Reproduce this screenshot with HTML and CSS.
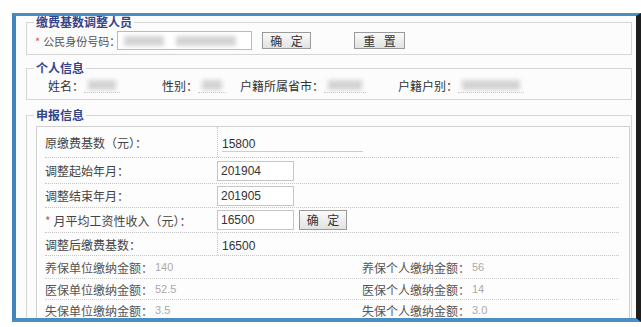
FILE: index.html
```html
<!DOCTYPE html>
<html>
  <head>
    <title>缴费基数调整</title>
    <link rel="stylesheet" href="styles.css">
  </head>
  <body>
    <div class="frame">
      <!-- 查询人员 -->
      <fieldset class="group group-query">
        <legend>缴费基数调整人员</legend>
        <div class="query-row">
          <label class="query-label"><span class="req">*</span>公民身份号码：</label>
          <div class="id-input">
            <span class="blur blur-a"></span>
            <span class="blur blur-b"></span>
          </div>
          <button class="btn btn-ok">确 定</button>
          <button class="btn btn-reset">重 置</button>
        </div>
      </fieldset>

      <!-- 个人信息 -->
      <fieldset class="group group-info">
        <legend>个人信息</legend>
        <div class="info-row">
          <div class="info-item item-name">
            <span>姓名：</span>
            <span class="info-value"><span class="blur blur-name"></span></span>
          </div>
          <div class="info-item item-sex">
            <span>性别：</span>
            <span class="info-value"><span class="blur blur-sex"></span></span>
          </div>
          <div class="info-item item-city">
            <span>户籍所属省市：</span>
            <span class="info-value"><span class="blur blur-city"></span></span>
          </div>
          <div class="info-item item-type">
            <span>户籍户别：</span>
            <span class="info-value"><span class="blur blur-type"></span></span>
          </div>
        </div>
      </fieldset>

      <!-- 申报信息 -->
      <fieldset class="group group-report">
        <legend>申报信息</legend>
        <div class="report">
          <div class="report-row row-1">
            <div class="report-label">原缴费基数（元）：</div>
            <div class="report-value text-value"><span class="underline">15800</span></div>
          </div>
          <div class="report-row row-2">
            <div class="report-label">调整起始年月：</div>
            <div class="report-value"><input class="field" type="text" value="201904"></div>
          </div>
          <div class="report-row row-3">
            <div class="report-label">调整结束年月：</div>
            <div class="report-value"><input class="field" type="text" value="201905"></div>
          </div>
          <div class="report-row row-4">
            <div class="report-label"><span class="req">*</span>月平均工资性收入（元）：</div>
            <div class="report-value">
              <input class="field" type="text" value="16500">
              <button class="btn btn-calc">确 定</button>
            </div>
          </div>
          <div class="report-row row-5">
            <div class="report-label">调整后缴费基数：</div>
            <div class="report-value text-value"><span>16500</span></div>
          </div>

          <div class="amount-row first">
            <div class="amount"><span class="amount-label">养保单位缴纳金额：</span><span class="amount-value">140</span></div>
            <div class="amount"><span class="amount-label">养保个人缴纳金额：</span><span class="amount-value">56</span></div>
          </div>
          <div class="amount-row">
            <div class="amount"><span class="amount-label">医保单位缴纳金额：</span><span class="amount-value">52.5</span></div>
            <div class="amount"><span class="amount-label">医保个人缴纳金额：</span><span class="amount-value">14</span></div>
          </div>
          <div class="amount-row">
            <div class="amount"><span class="amount-label">失保单位缴纳金额：</span><span class="amount-value">3.5</span></div>
            <div class="amount"><span class="amount-label">失保个人缴纳金额：</span><span class="amount-value">3.0</span></div>
          </div>
        </div>
      </fieldset>
    </div>
  </body>
</html>
```

FILE: styles.css
```css
body {
  margin: 0;
  background: #fff;
  font-family: "Noto Sans CJK SC", "Liberation Sans", sans-serif;
  font-size: 12px;
  color: #333;
}

.frame {
  margin: 13px 0 0 12px;
  height: 302px;
  border-top: 3px solid #4a8ec2;
  border-left: 4px solid #3f86bd;
  border-bottom: 4px solid #4a8ec2;
  border-right: 5px solid #1e1e1e;
  background: #fcfcfc;
  overflow: hidden;
}

.group {
  margin: 0 4px 0 10px;
  padding: 0;
  border: 1px solid #d6d6d6;
}

.group legend {
  margin-left: 7px;
  padding: 0 2px;
  font-size: 12px;
  font-weight: bold;
  line-height: 14px;
  color: #34448a;
}

.req {
  color: #e0504a;
  margin-right: 3px;
}

/* 查询 */
.group-query {
  padding: 3px 0 4px;
}

.group-query legend {
  line-height: 12px;
}

.query-row {
  display: flex;
  align-items: center;
  height: 19px;
  margin-left: 8px;
}

.query-label {
  width: 82px;
  font-size: 11px;
  color: #555;
  white-space: nowrap;
}

.id-input {
  box-sizing: border-box;
  width: 135px;
  height: 19px;
  border: 1px solid #bbb;
  background: #fff;
  display: flex;
  align-items: center;
  padding-left: 6px;
  gap: 12px;
}

.blur {
  display: inline-block;
  height: 10px;
  background: #d4d4d4;
  filter: blur(2px);
}

.blur-a { width: 40px; }
.blur-b { width: 60px; }

.btn {
  box-sizing: border-box;
  height: 17px;
  width: 49px;
  padding: 0 0 0 3px;
  border: 1px solid #9a9a9a;
  background: linear-gradient(#fafafa, #e2e2e2);
  font-family: "Noto Sans CJK SC", sans-serif;
  font-size: 12px;
  line-height: 15px;
  letter-spacing: 3px;
  color: #333;
}

.btn-ok {
  margin-left: 10px;
}

.btn-reset {
  margin-left: 43px;
  width: 51px;
}

/* 个人信息 */
.group-info {
  margin-top: 6px;
  padding: 0 0 4px;
}

.info-row {
  display: flex;
  align-items: center;
  height: 20px;
  margin-left: 21px;
}

.info-item {
  display: flex;
  align-items: center;
  white-space: nowrap;
}

.item-name { width: 114px; }
.item-sex { width: 78px; }
.item-city { width: 158px; }

.info-value {
  display: flex;
  align-items: center;
  height: 14px;
  border-bottom: 1px dotted #c8c8c8;
  padding: 0 4px;
}

.blur-name { width: 28px; }
.blur-sex { width: 20px; }
.blur-city { width: 34px; }
.blur-type { width: 58px; }

/* 申报信息 */
.group-report {
  margin-top: 8px;
  padding: 4px 0 0;
}

.report {
  margin: 0 1px 0 9px;
  border: 1px solid #d0d0d0;
  background: #fdfdfd;
  padding-bottom: 20px;
}

.report-row {
  display: flex;
  margin: 0 10px 0 8px;
  border-bottom: 1px dotted #c4c4c4;
  color: #444;
}

.report-label {
  width: 172px;
  display: flex;
  align-items: center;
  white-space: nowrap;
}

.report-value {
  flex: 1;
  display: flex;
  align-items: center;
  font-family: "Liberation Sans", sans-serif;
  color: #333;
}

.text-value {
  border-left: 1px dotted #c4c4c4;
  padding-left: 4px;
}

.row-1 { height: 30px; }
.row-1 .text-value { align-items: flex-end; padding-bottom: 5px; }
.row-1 .underline {
  width: 141px;
  line-height: 14px;
  border-bottom: 1px solid #cfcfcf;
}

.row-2 { height: 25px; }
.row-3 { height: 23px; }
.row-4 { height: 24px; }
.row-5 { height: 22px; }
.row-5 .text-value { padding-top: 3px; }

.field {
  box-sizing: border-box;
  width: 77px;
  height: 20px;
  margin: 0;
  padding: 0 0 0 3px;
  border: 1px solid #c6c6c6;
  background: #fff;
  font-family: "Liberation Sans", sans-serif;
  font-size: 12px;
  color: #333;
}

.btn-calc {
  height: 20px;
  width: 48px;
  margin-left: 5px;
  line-height: 18px;
}

.amount-row {
  display: grid;
  grid-template-columns: 317px 1fr;
  margin: 0 10px 0 8px;
  height: 20px;
  border-bottom: 1px dotted #d0d0d0;
}

.amount-row.first {
  height: 22px;
}

.amount {
  display: flex;
  align-items: center;
  white-space: nowrap;
}

.amount-label {
  width: 110px;
  color: #555;
}

.amount-value {
  font-family: "Liberation Sans", sans-serif;
  font-size: 11px;
  color: #aaa;
}
```
